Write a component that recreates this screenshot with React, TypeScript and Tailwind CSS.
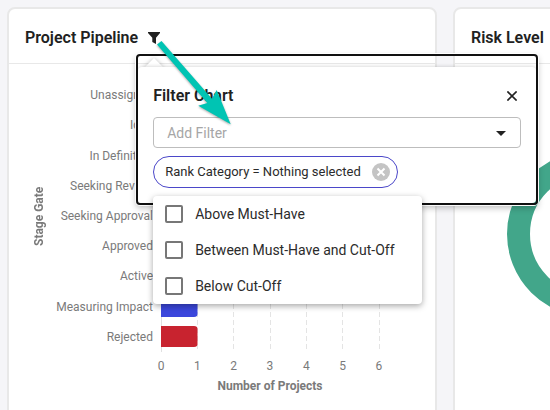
import React from 'react';

const stages = [
  'Unassigned',
  'Idea',
  'In Definition',
  'Seeking Review',
  'Seeking Approval',
  'Approved',
  'Active',
  'Measuring Impact',
  'Rejected',
];

const ticks = [0, 1, 2, 3, 4, 5, 6];

const options = ['Above Must-Have', 'Between Must-Have and Cut-Off', 'Below Cut-Off'];

const FilterPopover = () => {
  return (
    <div
      role="dialog"
      aria-label="Filter Chart"
      className="absolute -left-3 top-[22px] z-20 w-[402px] rounded border-2 border-[#111] pt-[11px] font-normal shadow-[0_0_0_1px_#fff,0_3px_6px_rgba(0,0,0,0.25)]"
    >
      {/* Pointer */}
      <svg
        className="absolute left-[6px] top-[2px] drop-shadow-[0_0_2px_rgba(0,0,0,0.25)]"
        width="20"
        height="10"
        viewBox="0 0 20 10"
        aria-hidden="true"
      >
        <path d="M0 10L10 0L20 10Z" fill="#fff" />
      </svg>

      <div className="relative rounded-sm bg-white px-[15px] pb-[15px] pt-[17px] shadow-[0_0_4px_rgba(0,0,0,0.2)]">
        <div className="flex h-6 items-center justify-between pr-1">
          <h3 className="text-base font-semibold text-[#212121]">Filter Chart</h3>
          <button type="button" aria-label="Close">
            <svg width="10" height="10" viewBox="0 0 10 10" stroke="#222" strokeWidth="1.6">
              <path d="M0.4 0.4L9.6 9.6M9.6 0.4L0.4 9.6" />
            </svg>
          </button>
        </div>

        <div className="relative mt-[9px]">
          <select
            aria-label="Add Filter"
            className="block h-[31px] w-full appearance-none rounded border border-[#bdbdbd] bg-white px-[13px] text-sm text-[#a6a6a6]"
          >
            <option>Add Filter</option>
          </select>
          <svg className="pointer-events-none absolute right-[15px] top-[14px]" width="10" height="5" viewBox="0 0 10 5" aria-hidden="true">
            <path d="M0 0H10L5 5Z" fill="#222" />
          </svg>
        </div>

        <div className="relative mt-2">
          <div className="inline-flex h-8 items-center gap-[11px] rounded-full border border-[#4b47c9] pl-[11px] pr-[7px] text-[13px] text-[#2b2b2b]">
            <span>Rank Category = Nothing selected</span>
            <button type="button" aria-label="Remove filter">
              <svg width="18" height="18" viewBox="0 0 18 18">
                <circle cx="9" cy="9" r="9" fill="#c4c4c4" />
                <path d="M5.5 5.5L12.5 12.5M12.5 5.5L5.5 12.5" stroke="#fff" strokeWidth="2" />
              </svg>
            </button>
          </div>

          {/* Options menu */}
          <div className="absolute left-0 top-10 w-[269px] rounded bg-white shadow-[0_2px_6px_rgba(0,0,0,0.35)]">
            {options.map((option) => (
              <label key={option} className="flex h-9 items-center gap-3 px-3 text-sm text-[#2b2b2b]">
                <input
                  type="checkbox"
                  className="size-[18px] shrink-0 appearance-none rounded-xs border-2 border-[#777] bg-white"
                />
                {option}
              </label>
            ))}
          </div>
        </div>
      </div>

      {/* Arrow from the filter icon to the filter box */}
      <svg
        className="pointer-events-none absolute -top-4 left-[17px] drop-shadow-[0_1px_1px_rgba(0,0,0,0.35)]"
        width="80"
        height="88"
        viewBox="155 40 80 88"
        aria-hidden="true"
      >
        <path d="M157 44.5L161.5 41L212 98.7L216.7 90L230.7 124.3L198.3 105.7L207.3 103Z" fill="#00c4b3" />
      </svg>
    </div>
  );
};

const PipelineChart = () => {
  return (
    <div className="pb-8 pl-[23px] pt-4 text-xs text-[#7a7a7a]">
      <div className="flex h-[272px]">
        <div className="flex w-[14px] rotate-180 items-center justify-center font-bold leading-[14px] [writing-mode:vertical-rl]">
          Stage Gate
        </div>
        <ul className="flex w-[107px] flex-col text-right">
          {stages.map((stage) => (
            <li key={stage} className="flex flex-1 items-center justify-end whitespace-nowrap">
              {stage}
            </li>
          ))}
        </ul>
        <svg className="ml-2" width="220" height="272" viewBox="0 0 220 272" aria-hidden="true">
          <path d="M0.5 0V272" stroke="#e0e0e0" />
          <path
            d="M36.5 0V272M72.5 0V272M109.5 0V272M145.5 0V272M181.5 0V272M218.5 0V272"
            stroke="#e4e4e4"
            strokeDasharray="5 3"
          />
          <path d="M0 216H33Q36.500 216 36.500 219V234Q36.500 237 33 237H0Z" fill="#3b47dc" />
          <path d="M0 246H33Q36.500 246 36.500 249V264Q36.500 267 33 267H0Z" fill="#c8232f" />
        </svg>
      </div>
      <div className="ml-[121px] w-[234px]">
        <div className="mt-[6px] flex justify-between">
          {ticks.map((tick) => (
            <span key={tick} className="w-4 text-center">
              {tick}
            </span>
          ))}
        </div>
        <div className="mt-1 text-center font-bold">Number of Projects</div>
      </div>
    </div>
  );
};

const cardClass = 'w-[430px] shrink-0 rounded-lg border-2 border-[#e8e8e8] bg-white';
const headerClass =
  'flex h-[55px] items-center gap-[10px] border-b border-[#e8e8e8] px-4 pt-1 text-base font-semibold text-[#212121]';

export default function App() {
  return (
    <main className="flex min-h-screen gap-4 overflow-hidden bg-[#f5f5f8] pl-[7px] pt-[7px] font-[Roboto,sans-serif]">
      <section className={`${cardClass} relative z-10`}>
        <header className={headerClass}>
          <h2>Project Pipeline</h2>
          <div className="relative flex">
            <button type="button" aria-label="Filter">
              <svg width="12" height="12" viewBox="0 0 12 12" className="block">
                <path d="M0 0H12V1L8 5.800V12L4.300 10V5.800L0 1Z" fill="#212121" />
              </svg>
            </button>
            <FilterPopover />
          </div>
        </header>
        <PipelineChart />
      </section>

      <section className={cardClass}>
        <header className={headerClass}>
          <h2>Risk Level</h2>
        </header>
        <div className="pl-[52px] pt-[87px]">
          <svg width="166" height="166" viewBox="0 0 166 166" aria-hidden="true">
            <circle cx="83" cy="83" r="71.5" fill="none" stroke="#42a68a" strokeWidth="23" />
          </svg>
        </div>
      </section>
    </main>
  );
}
